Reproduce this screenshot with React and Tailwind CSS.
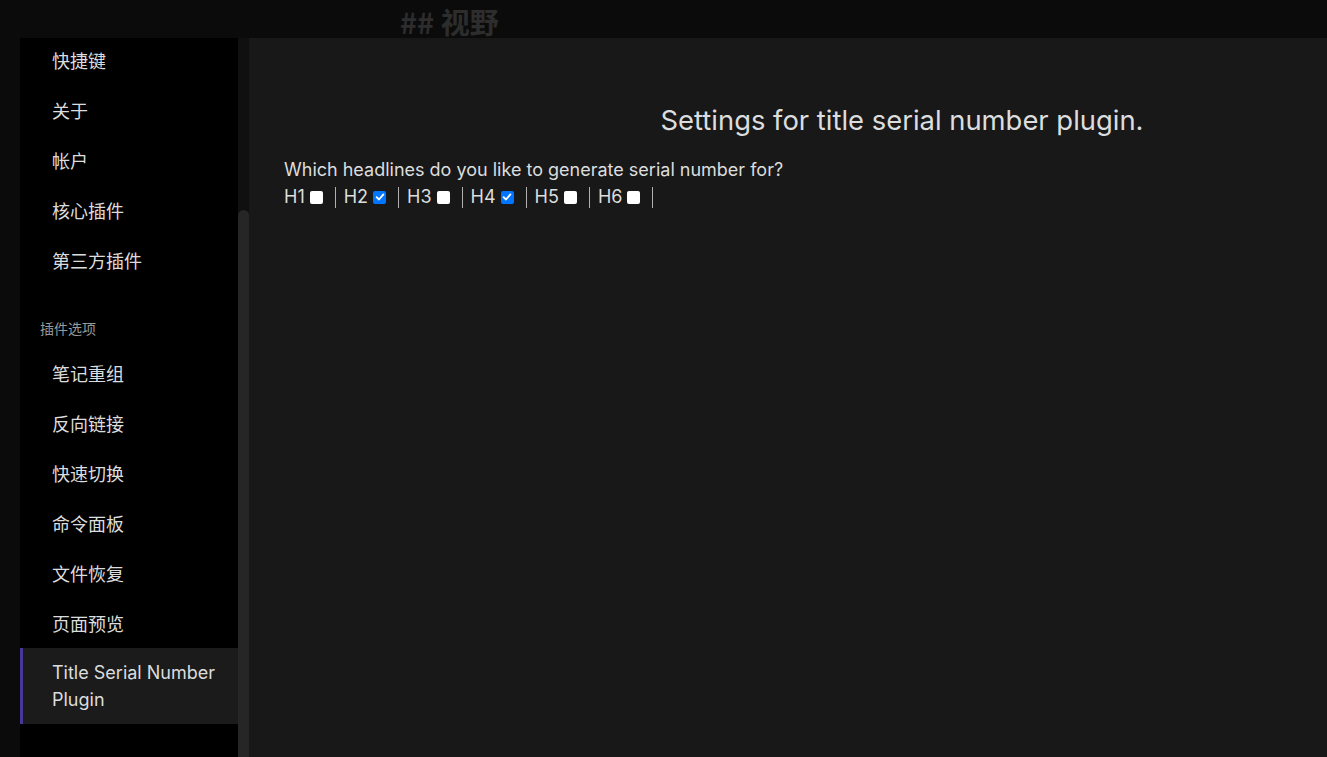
import React from 'react';

const topItems = ['快捷键', '关于', '帐户', '核心插件', '第三方插件'];
const pluginItems = ['笔记重组', '反向链接', '快速切换', '命令面板', '文件恢复', '页面预览'];
const headings = [
  { label: 'H1', checked: false },
  { label: 'H2', checked: true },
  { label: 'H3', checked: false },
  { label: 'H4', checked: true },
  { label: 'H5', checked: false },
  { label: 'H6', checked: false },
];

const font = "font-['Inter','Noto_Sans_CJK_SC',sans-serif]";

const Box = ({ checked }) =>
  checked ? (
    <span className="ml-[5px] flex h-[13px] w-[13px] items-center justify-center rounded-[2px] bg-[#0075ff]">
      <svg width="10" height="10" viewBox="0 0 10 10" fill="none">
        <path d="M1.6 5.2 L4 7.5 L8.4 2.4" stroke="white" strokeWidth="1.8" strokeLinecap="round" strokeLinejoin="round" />
      </svg>
    </span>
  ) : (
    <span className="ml-[5px] h-[13px] w-[13px] rounded-[2px] bg-white" />
  );

const NavItem = ({ label }) => (
  <div className="flex h-[50px] items-center pl-[32px] text-[18px] text-[#dcddde]">{label}</div>
);

export default function App() {
  return (
    <div className={`flex h-[757px] w-[1327px] flex-col overflow-hidden bg-[#0b0b0b] ${font}`}>
      <div className="flex h-[38px] shrink-0 items-center pl-[400px] pt-[6px] text-[29px] font-bold text-[#2d2d2d] font-['Noto_Sans_CJK_SC',sans-serif]">
        ## 视野
      </div>
      <div className="flex min-h-0 flex-1">
        <div className="w-[20px] shrink-0" />
        <div className="w-[218px] shrink-0 overflow-hidden bg-black">
          <div className="-mt-[2px]">
            {topItems.map((t) => (
              <NavItem key={t} label={t} />
            ))}
          </div>
          <div className="pl-[20px] pt-[33px] pb-[10px] text-[14px] leading-[20px] text-[#999999]">插件选项</div>
          {pluginItems.map((t) => (
            <NavItem key={t} label={t} />
          ))}
          <div className="-mt-px border-l-[3px] border-[#483699] bg-[#1b1b1b] py-[11px] pl-[29px] pr-[10px] text-[18px] leading-[27px] text-[#dcddde]">
            Title Serial Number Plugin
          </div>
        </div>
        <div className="flex w-[11px] shrink-0 flex-col bg-[#101010]">
          <div className="h-[172px] shrink-0" />
          <div className="flex-1 rounded-t-[6px] bg-[#262626]" />
        </div>
        <div className="flex-1 bg-[#181818] pl-[35px] text-[#dcddde]">
          <div className="flex justify-center pl-[193px] pt-[64px] text-[27.4px] leading-[36px]">
            Settings for title serial number plugin.
          </div>
          <div className="mt-[19px] text-[18px] leading-[26px]">
            Which headlines do you like to generate serial number for?
          </div>
          <div className="mt-px flex items-center text-[18px] leading-[26px]">
            {headings.map((h) => (
              <div key={h.label} className="flex items-center">
                <span>{h.label}</span>
                <Box checked={h.checked} />
                <span className="ml-[12px] mr-[8px] h-[21px] w-px bg-[#b0b0b0]" />
              </div>
            ))}
          </div>
        </div>
      </div>
    </div>
  );
}
